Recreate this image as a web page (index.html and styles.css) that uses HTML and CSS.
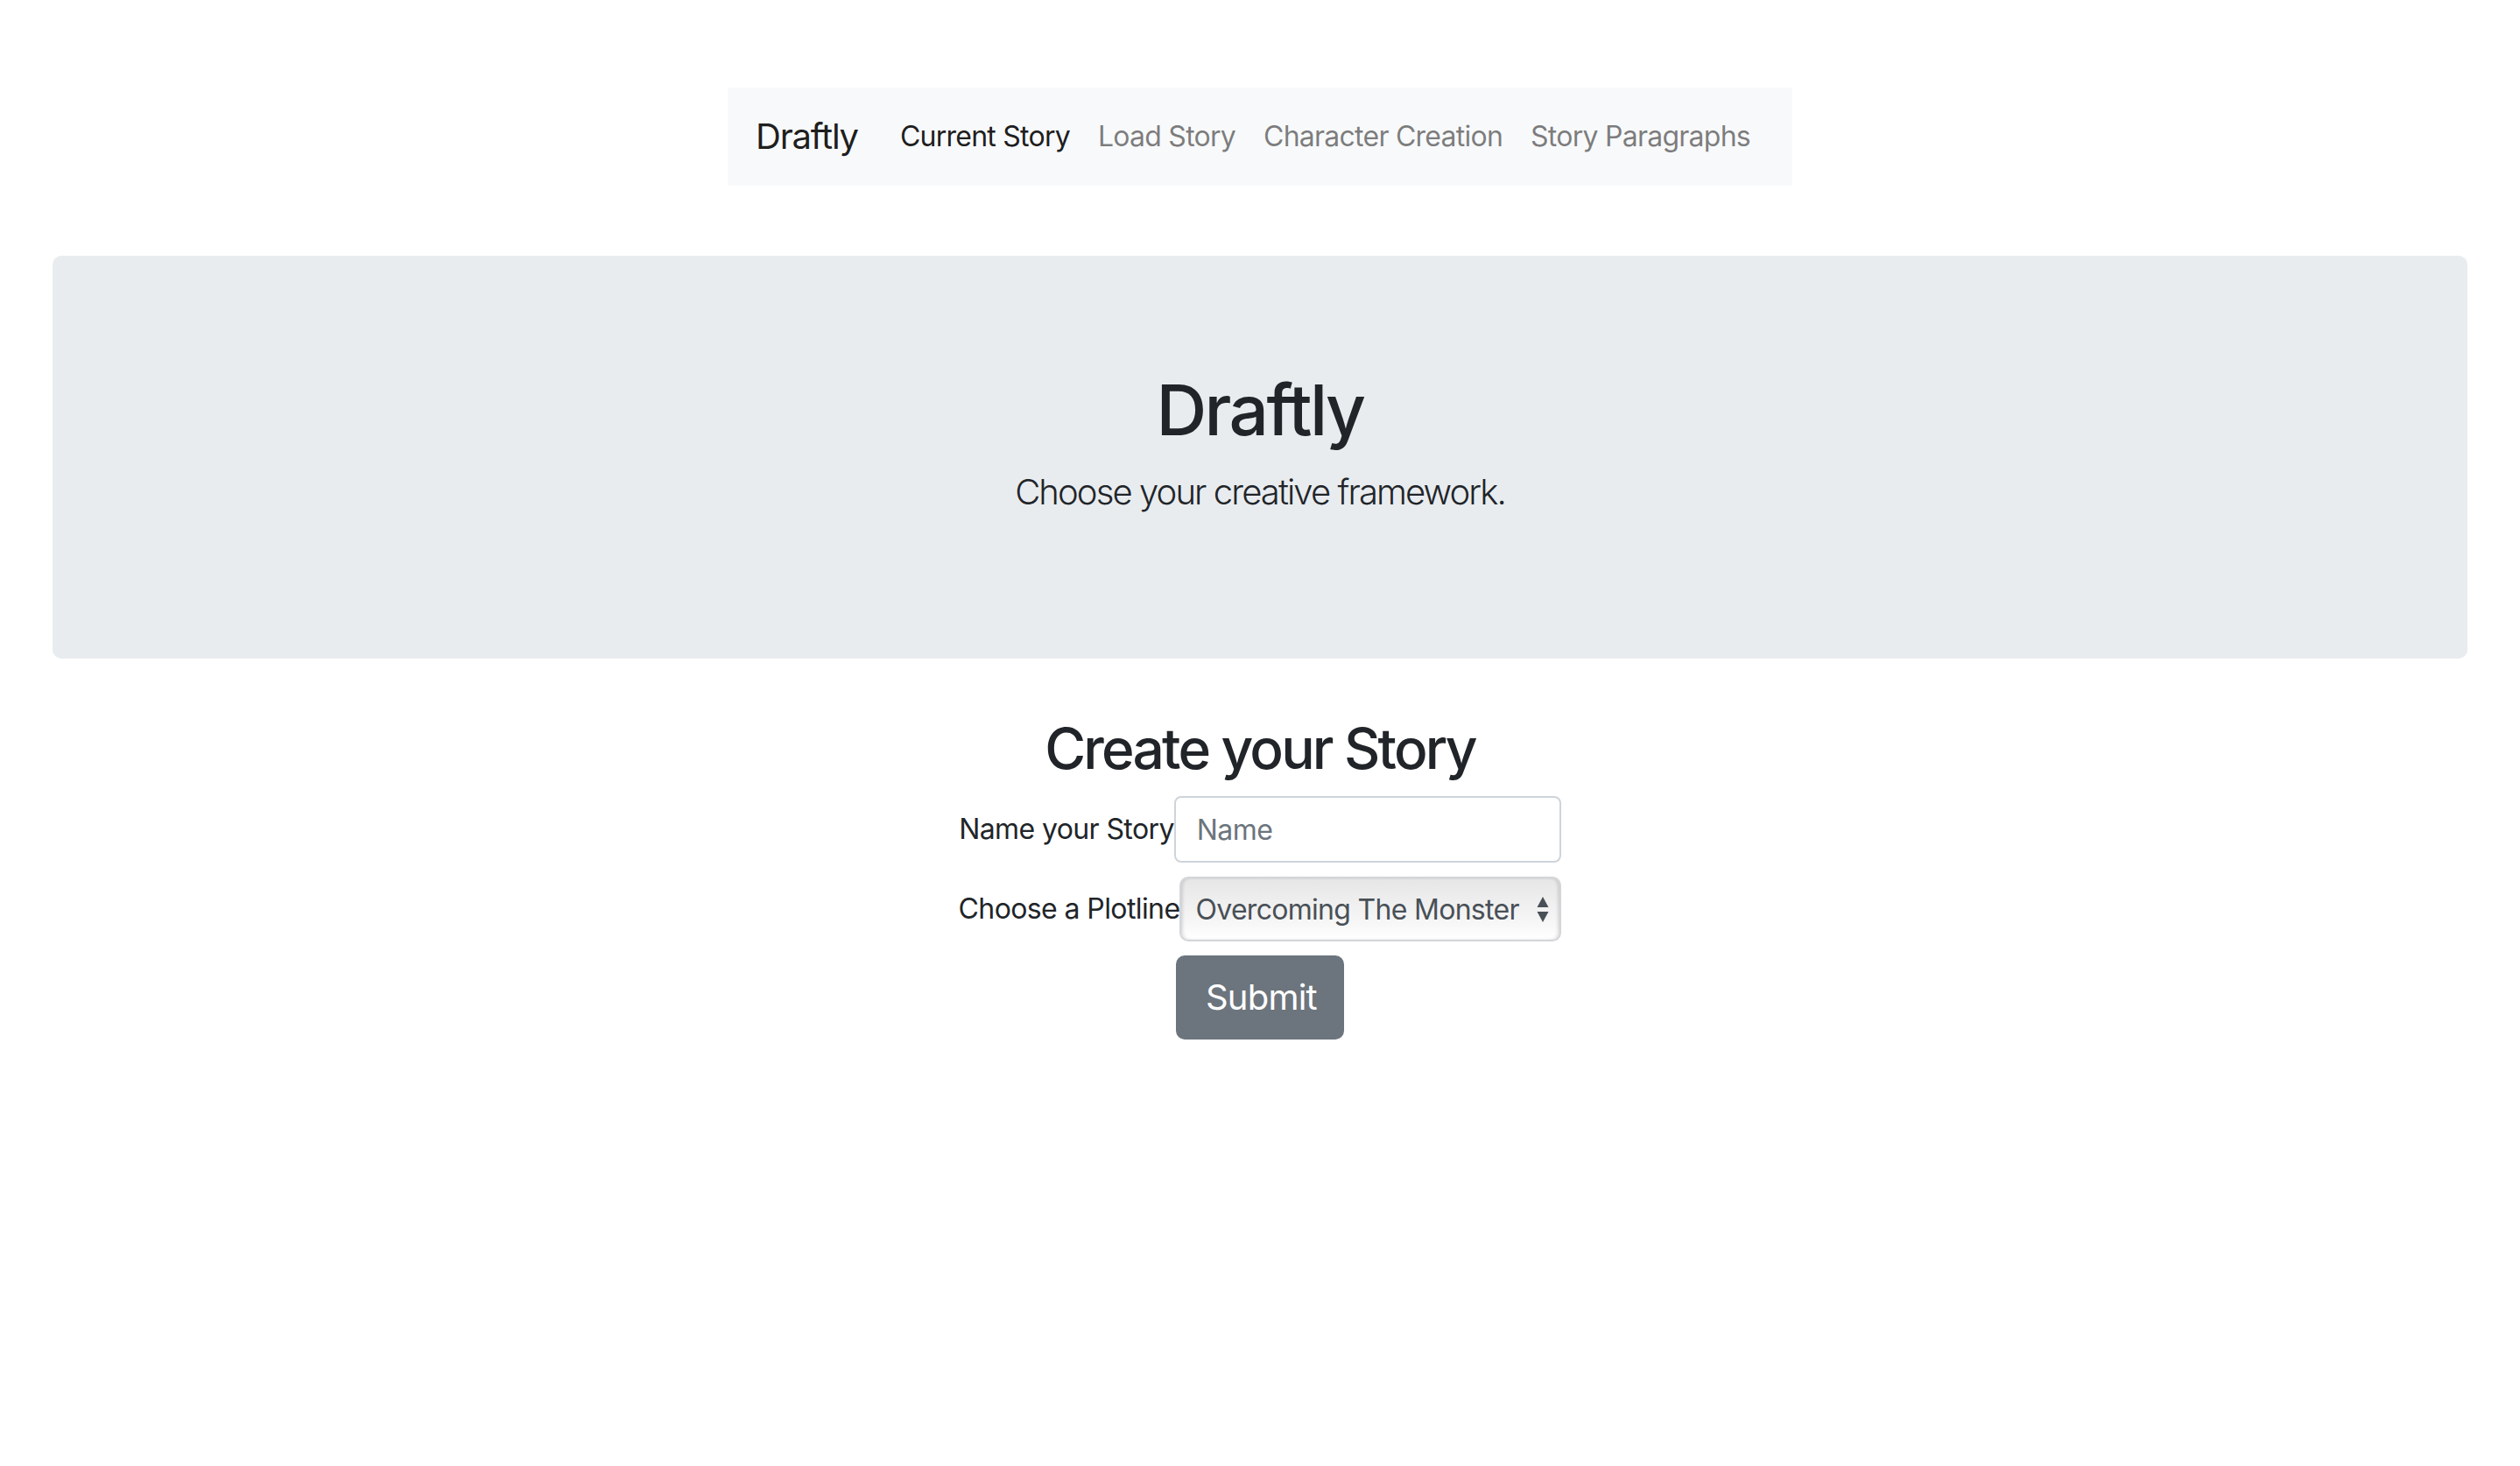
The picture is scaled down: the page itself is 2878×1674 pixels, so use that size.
FILE: index.html
```html
<!DOCTYPE html>
<html lang="en">
<head>
<meta charset="utf-8">
<title>Draftly</title>
<link rel="stylesheet" href="styles.css">
</head>
<body>
<div class="page">
  <nav class="navbar">
    <a class="brand" href="#">Draftly</a>
    <ul class="nav">
      <li><a class="nav-link active" href="#">Current Story</a></li>
      <li><a class="nav-link" href="#">Load Story</a></li>
      <li><a class="nav-link" href="#">Character Creation</a></li>
      <li><a class="nav-link" href="#">Story Paragraphs</a></li>
    </ul>
  </nav>

  <div class="jumbotron">
    <h1 class="jumbo-title">Draftly</h1>
    <p class="lead">Choose your creative framework.</p>
  </div>

  <section class="create">
    <h2 class="create-title">Create your Story</h2>
    <form class="story-form">
      <div class="form-row">
        <label class="form-label" for="name">Name your Story</label>
        <input class="text-input" id="name" type="text" placeholder="Name">
      </div>
      <div class="form-row">
        <label class="form-label" for="plot">Choose a Plotline</label>
        <div class="select-wrap">
          <select class="plot-select" id="plot">
            <option>Overcoming The Monster</option>
            <option>Rags to Riches</option>
            <option>The Quest</option>
            <option>Voyage and Return</option>
            <option>Comedy</option>
            <option>Tragedy</option>
            <option>Rebirth</option>
          </select>
          <svg class="select-arrows" width="14" height="32" viewBox="0 0 14 32" aria-hidden="true">
            <path d="M7 1 L13.5 13 L0.5 13 Z" fill="#495057"/>
            <path d="M0.5 18 L13.5 18 L7 30 Z" fill="#495057"/>
          </svg>
        </div>
      </div>
      <button class="btn-submit" type="button">Submit</button>
    </form>
  </section>
</div>
</body>
</html>
```

FILE: styles.css
```css
* {
  box-sizing: border-box;
}

html, body {
  margin: 0;
  padding: 0;
  background: #fff;
}

body {
  font-family: Inter, "Noto Sans", "Liberation Sans", sans-serif;
  color: #212529;
  font-size: 32px;
  line-height: 1.5;
}

.page {
  padding-top: 100px;
}

/* Navbar */
.navbar {
  display: flex;
  align-items: center;
  width: fit-content;
  height: 112px;
  margin: 0 auto 80px;
  padding: 16px 32px;
  background: #f8f9fa;
}

.brand {
  font-size: 40px;
  line-height: 60px;
  padding: 10px 0;
  margin-right: 32px;
  color: rgba(0, 0, 0, 0.9);
  text-decoration: none;
  letter-spacing: -1.2px;
}

.nav {
  display: flex;
  list-style: none;
  margin: 0;
  padding: 0;
}

.nav-link {
  display: block;
  padding: 0 16px;
  font-size: 32px;
  line-height: 48px;
  color: rgba(0, 0, 0, 0.5);
  text-decoration: none;
  letter-spacing: -0.75px;
}

.nav-link.active {
  color: rgba(0, 0, 0, 0.9);
}

/* Jumbotron */
.jumbotron {
  margin: 0 60px 64px;
  padding: 128px 64px;
  background: #e9ecef;
  border-radius: 10px;
  text-align: center;
}

.jumbo-title {
  margin: 0 0 16px;
  font-size: 80px;
  line-height: 96px;
  font-weight: 500;
  letter-spacing: -2.6px;
}

.lead {
  margin: 0 0 32px;
  font-size: 40px;
  line-height: 60px;
  font-weight: 300;
  letter-spacing: -1.9px;
}

/* Create section */
.create {
  text-align: center;
}

.create-title {
  margin: 0 0 16px;
  font-size: 64px;
  line-height: 77px;
  font-weight: 500;
  letter-spacing: -2.8px;
}

.story-form {
  display: flex;
  flex-direction: column;
  align-items: center;
  gap: 16px;
}

.form-row {
  display: flex;
  align-items: center;
}

.form-label {
  font-size: 32px;
  line-height: 48px;
  color: #212529;
  letter-spacing: -0.6px;
}

.text-input {
  width: 442px;
  height: 76px;
  padding: 12px 24px;
  font-family: inherit;
  font-size: 32px;
  line-height: 48px;
  color: #495057;
  background: #fff;
  border: 2px solid #ced4da;
  border-radius: 8px;
  outline: none;
  letter-spacing: -0.6px;
}

.text-input::placeholder {
  color: #6c757d;
}

.select-wrap {
  position: relative;
  display: flex;
}

.plot-select {
  -webkit-appearance: none;
  appearance: none;
  width: 436px;
  height: 74px;
  padding: 0 34px 0 16px;
  font-family: inherit;
  font-size: 32px;
  color: #495057;
  background: linear-gradient(#e6e6e6, #f6f6f6 70%, #ffffff);
  border: 2px solid #d3d6d9;
  border-radius: 10px;
  box-shadow: inset 3px 0 4px -2px rgba(0, 0, 0, 0.18), inset -3px 0 4px -2px rgba(0, 0, 0, 0.18);
  letter-spacing: -0.7px;
  outline: none;
}

.select-arrows {
  position: absolute;
  right: 14px;
  top: 22px;
  pointer-events: none;
}

.btn-submit {
  width: 192px;
  height: 96px;
  padding: 16px 32px;
  font-family: inherit;
  font-size: 40px;
  line-height: 60px;
  color: #fff;
  background: #6c757d;
  border: 2px solid #6c757d;
  border-radius: 10px;
  letter-spacing: -0.8px;
}
```
